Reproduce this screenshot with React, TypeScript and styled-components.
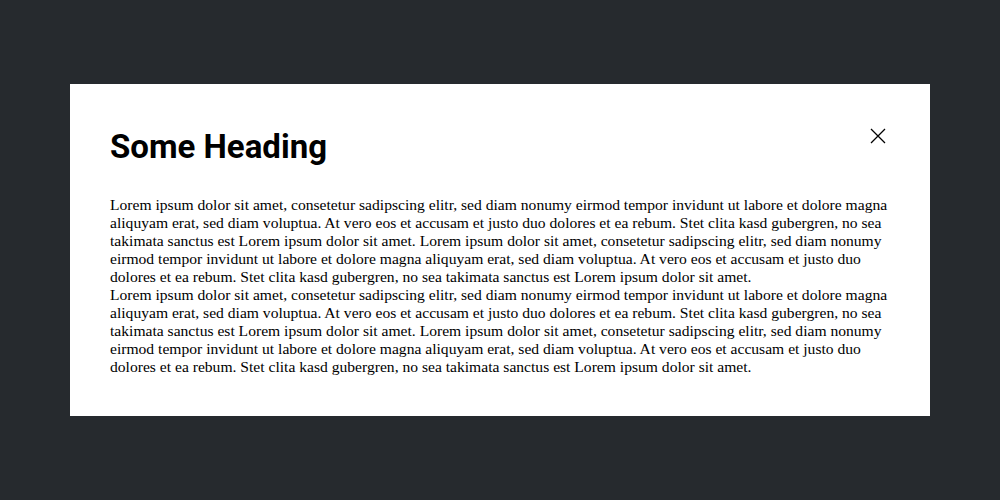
import React from "react";
import styled, { createGlobalStyle } from "styled-components";

const Global = createGlobalStyle`
  html, body { margin: 0; padding: 0; }
  body { background: #262a2e; }
`;

const Backdrop = styled.div`
  width: 1000px;
  height: 500px;
  display: flex;
  align-items: center;
  justify-content: center;
  background: #262a2e;
`;

const Dialog = styled.div`
  width: 860px;
  box-sizing: border-box;
  padding: 40px;
  background: #ffffff;
  display: flex;
  flex-direction: column;
`;

const Header = styled.div`
  display: flex;
  justify-content: space-between;
  align-items: flex-start;
  margin-bottom: 32px;
`;

const Heading = styled.h2`
  margin: 0;
  padding-top: 3px;
  height: 37px;
  font-family: Roboto, "Liberation Sans", sans-serif;
  font-weight: 700;
  font-size: 33px;
  line-height: 40px;
  letter-spacing: 0;
  color: #000;
`;

const Close = styled.button`
  width: 24px;
  height: 24px;
  padding: 0;
  border: none;
  background: transparent;
  display: flex;
  align-items: center;
  justify-content: center;
  cursor: pointer;
`;

const Para = styled.p`
  margin: 0;
  font-family: "Liberation Serif", serif;
  font-size: 15.6px;
  line-height: 18px;
  color: #000;
`;

const text =
  "Lorem ipsum dolor sit amet, consetetur sadipscing elitr, sed diam nonumy eirmod tempor invidunt ut labore et dolore magna aliquyam erat, sed diam voluptua. At vero eos et accusam et justo duo dolores et ea rebum. Stet clita kasd gubergren, no sea takimata sanctus est Lorem ipsum dolor sit amet. Lorem ipsum dolor sit amet, consetetur sadipscing elitr, sed diam nonumy eirmod tempor invidunt ut labore et dolore magna aliquyam erat, sed diam voluptua. At vero eos et accusam et justo duo dolores et ea rebum. Stet clita kasd gubergren, no sea takimata sanctus est Lorem ipsum dolor sit amet.";

export default function App() {
  return (
    <>
      <Global />
      <Backdrop>
        <Dialog>
          <Header>
            <Heading>Some Heading</Heading>
            <Close aria-label="Close">
              <svg width="16" height="16" viewBox="0 0 16 16">
                <path d="M1 1 L15 15 M15 1 L1 15" stroke="#000" strokeWidth="1.3" fill="none" />
              </svg>
            </Close>
          </Header>
          <Para>{text}</Para>
          <Para>{text}</Para>
        </Dialog>
      </Backdrop>
    </>
  );
}
